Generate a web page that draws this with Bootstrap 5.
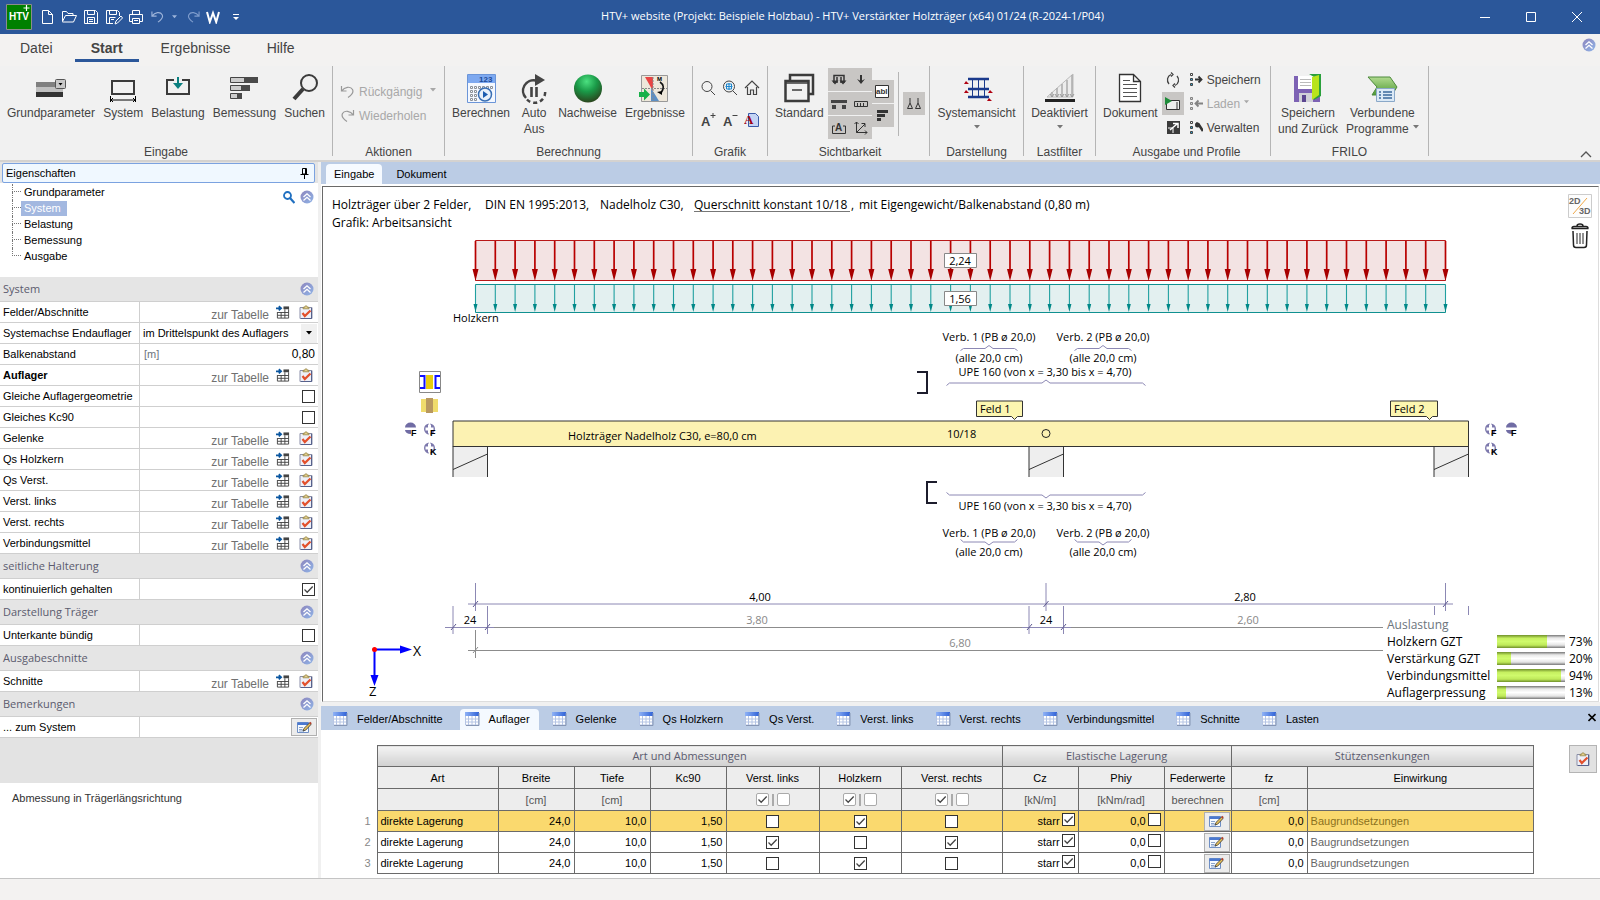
<!DOCTYPE html>
<html lang="de">
<head>
<meta charset="utf-8">
<meta name="viewport" content="width=device-width, initial-scale=1">
<title>HTV+ Verstärkter Holzträger</title>
<link href="https://cdn.jsdelivr.net/npm/bootstrap@5.3.0/dist/css/bootstrap.min.css" rel="stylesheet">
<style>
:root{--ui:"Liberation Sans",Arial,sans-serif;--hum:"Open Sans","Noto Sans",sans-serif;--blue:#2b579a;--strip:#bbcce5;--ink:#444}
body{font-family:var(--ui);font-size:11px;line-height:16px;color:#000;background:#f0f0f0;overflow:hidden}
button{border:0;background:none;padding:0;color:inherit;font:inherit}
svg{display:block;flex:none}
a{color:inherit;text-decoration:none}
/* title bar */
.titlebar{height:34px;background:var(--blue);color:#fff;font-family:var(--hum)}
.applogo{width:26px;height:26px;margin:0 8px 0 6px}
.quick{gap:6px}
.wincap{left:0;right:0;top:8px;text-align:center;font-size:11px;padding-left:105px;pointer-events:none}
.winbtns button{width:46px;height:34px;display:grid;place-items:center}
/* menu and ribbon */
.ribbon{height:128px;background:#f1f1f1;border-bottom:2px solid #d4d2d0;color:var(--ink);font-size:12px}
.menurow{height:32px;background:#f3f2f1;font-size:14px;gap:8px;padding-left:6px}
.menurow a{height:28px;line-height:29px;padding:0 14px;border-bottom:3px solid transparent}
.menurow a.active{font-weight:700;border-color:var(--blue);padding:0 16px}
.rgroups{height:94px}
.rgroup{border-right:1px solid #b5b5b5;height:90px;display:flex;flex-direction:column;padding:0 7px;flex:none}
.rgroup>.items{flex:1;display:flex;justify-content:space-between;align-items:flex-start;padding-top:6px}
.rgroup>.stackbtns{padding-top:14px}
.rgroup>.cap{text-align:center;line-height:16px;height:12px}
.bigbtn{display:flex;flex-direction:column;align-items:center;text-align:center;line-height:16px;white-space:nowrap}
.bigbtn svg{margin-bottom:1px}
.arrow{color:#777}
.rowbtn{display:flex;align-items:center;height:24px;gap:4px;white-space:nowrap}
.dim{color:#a8a8a8}
.w1{width:333px}.w2{width:112px}.w3{width:248px}.w4{width:75px}.w5{width:162px}.w6{width:94px}.w7{width:72px}.w8{width:175px}.w9{width:158px}
.graf{display:grid;grid-template-columns:repeat(3,22px);grid-auto-rows:32px;place-items:center}
.tg{background:#c8c6c4;width:22px;height:23px;display:grid;place-items:center}
.liftup{margin-top:-4px}
.vsep{width:1px;height:64px;background:#b5b5b5}
/* property panel */
.props{width:318px;background:#e3e3e3;flex:none}
.ptitle{height:20px;margin:1px 3px 0 2px;border:1px solid #7ba2e0;border-radius:2px;background:#f0f8ff;padding:0 5px 0 3px;line-height:18px}
.tree{background:#fff;height:94px;position:relative;padding:1px 0 0 12px}
.tree ul{list-style:none;margin:0;padding:0;width:52px}
.tree li{height:16px;line-height:15px;display:flex;align-items:center;position:relative}
.tree li::before{content:"";width:9px;height:8px;border-left:1px dotted #777;border-bottom:1px dotted #777;flex:none;align-self:flex-start}
.tree li:not(:last-child)::after{content:"";position:absolute;left:0;top:8px;height:8px;border-left:1px dotted #777}
.tree li a{padding:0 3px 0 3px;white-space:nowrap}
.tree li a.active{background:#a3b8e0;color:#fff;padding-right:6px}
.treetools{position:absolute;right:4px;top:7px;display:flex;gap:5px}
.phead{height:25px;background:#e5e5e5;border-bottom:1px solid #cfcfcf;font-family:var(--hum);color:#5b5b6e;font-weight:500;padding:0 4px 0 3px;display:flex;align-items:center;justify-content:space-between}
.prow{height:21px;background:#fff;border-bottom:1px solid #cfcfcf;display:flex}
.prow>.k{width:140px;flex:none;border-right:1px solid #cfcfcf;padding-left:3px;line-height:20px;white-space:nowrap}
.prow>.v{flex:1;display:flex;align-items:center;justify-content:flex-end;padding-right:3px;min-width:0}
.prow>.v[data-zt]{padding-right:5px}
.prow>.flush{padding-right:1px}
.prow .lnk{color:#707070;font-size:12px;margin:5px 7px 0 0}
.prow .v button+button{margin-left:9px}
.prow input.num{border:0;background:none;width:60px;text-align:right;padding:0;font-size:12px;outline:0}
.prow select{border:0;background:#fff;appearance:none;flex:1;min-width:0;height:19px;padding:0 0 0 3px;font-size:11px;color:#000}
.ddarrow{width:16px;height:19px;background:#f0f0f0;display:grid;place-items:center;pointer-events:none}
.notebtn{width:26px;height:18px;border:1px solid #b0b0b0;background:#ececec;display:grid;place-items:center}
.ck{appearance:none;width:13px;height:13px;border:1px solid #333;background:#fff;margin:0;display:block;flex:none}
.ck:checked{background:#fff url("data:image/svg+xml,%3Csvg xmlns='http://www.w3.org/2000/svg' viewBox='0 0 11 11'%3E%3Cpath d='M1.5 5.5l2.700 2.700L9.700 2.500' fill='none' stroke='%23444' stroke-width='1.300'/%3E%3C/svg%3E") center/11px}
.ck.soft{border-color:#aaa;border-radius:2px;opacity:1}
.help{height:95px;background:#fff;padding:7px 12px;color:#333}
/* work area */
.work{margin-left:3px;background:#fff;min-width:0}
.doctabs{height:22px;background:var(--strip);padding-left:5px}
.doctabs a{height:20px;line-height:21px;padding:0 8px;border-radius:4px 4px 0 0}
.doctabs a.active{background:#f6faff}
.doctabs a+a{margin-left:6px}
.stage{position:relative;margin:2px 1px 0 1px;border:1px solid #ddd;border-top-color:#696969;border-left-color:#696969;min-height:0;overflow:hidden;background:#fff}
.stage>svg.plan{width:100%;height:100%;font-family:var(--hum);font-size:11px}
.plan .hd{font-size:12px}
.plan .mid{text-anchor:middle}
.plan .soft{fill:#888}
.stagetools{position:absolute;right:6px;top:7px;display:flex;flex-direction:column;align-items:center;gap:5px}
.usage{position:absolute;right:0;bottom:0;width:213px;background:#fff;font:12px/17px var(--hum);padding-left:2px}
.usage .bar{width:68px;height:13px;background:linear-gradient(#777,#e8e8e8 22%,#fff 50%,#e4e4e4 78%,#777)}
.usage .bar>i{display:block;height:13px;background:linear-gradient(#6f8f2a,#c6f060 25%,#cffa6c 50%,#bfe95a 78%,#6f8f2a)}
.usage .pc{width:33px;padding-left:4px}
.gridtabs{height:24px;margin-top:4px;background:var(--strip);padding:3px 4px 0 7px;box-shadow:0 -4px #f0f0f0}
.gridtabs a{display:flex;align-items:center;gap:9px;height:21px;padding:0 9px 2px 5px;margin-right:8px;white-space:nowrap;border-radius:4px 4px 0 0}
.gridtabs a.active{background:#f4f9ff}
.gridzone{height:148px;padding:15px 3px 0 24px}
.sheet{border-collapse:collapse;table-layout:fixed;width:100%;margin-right:35px}
.sheet th,.sheet td{border:1px solid #6a6a6a;padding:0 3px;height:21px;line-height:18px;font-weight:400;white-space:nowrap;overflow:hidden}
.sheet thead th{background:#ededed;text-align:center;height:22px;padding:0}
.sheet thead tr:first-child th{height:21px;background:linear-gradient(#f4f4f4,#d0d0d0);font-family:var(--hum);color:#5b5b6e}
.sheet .un th{color:#555}
.sheet th.no,.sheet thead tr th.no{border:0;background:#fff;color:#888;text-align:right;padding-right:6px}
.sheet tr.sel td{background:#fad96e}
.sheet .r{text-align:right}
.sheet .ck{margin:auto}
.sheet .duo{display:flex;justify-content:center;align-items:center;gap:3px}
.sheet .duo .ck{margin:0}
.sheet .duo i{width:2px;height:12px;background:#aaa}
.sheet .vc{display:flex;justify-content:flex-end;gap:2px}
.sheet .vc .ck{margin:1px 0 0}
.sheet td.b{padding:0 1px}
.sheet .notebtn{height:19px;margin-left:auto}
.sheet .ew{color:#666}
.sheet tr.sel .ew{color:#8a7120}
.toolbtn{width:28px;height:28px;background:#e2e2e2;border:1px solid #b4b4b4;display:grid;place-items:center;flex:none}
.status{height:22px;background:#f3f2f1;border-top:1px solid #c4c4c4}
</style>
</head>
<body class="vh-100 d-flex flex-column">
<svg width="0" height="0" class="position-absolute" aria-hidden="true">
<defs>
<linearGradient id="gb" x1="0" y1="0" x2="1" y2="1"><stop offset="0" stop-color="#8e86bd"/><stop offset="1" stop-color="#8fb4e8"/></linearGradient>
<radialGradient id="gg" cx=".45" cy=".25" r=".8"><stop offset="0" stop-color="#4be080"/><stop offset=".45" stop-color="#1a9a48"/><stop offset="1" stop-color="#2c3a18"/></radialGradient>
<linearGradient id="gh" x1="0" y1="0" x2="1" y2="0"><stop offset="0" stop-color="#8fb2f5"/><stop offset="1" stop-color="#2f62d8"/></linearGradient>
<linearGradient id="gv" x1="0" y1="0" x2="0" y2="1"><stop offset="0" stop-color="#b2db90"/><stop offset="1" stop-color="#4e9a35"/></linearGradient>
<symbol id="chev" viewBox="0 0 14 14"><circle cx="7" cy="7" r="6.500" fill="url(#gb)"/><path d="M3.500 7L7 3.800 10.500 7M3.500 10.500L7 7.300l3.500 3.200" fill="none" stroke="#fff" stroke-width="1.300"/></symbol>
<symbol id="tbl" viewBox="0 0 15 15"><path d="M0 3h5M3 .8L5.500 3 3 5.200" stroke="#0a56a0" stroke-width="1.800" fill="none"/><path d="M8 1h6v3H8z" fill="#444"/><path d="M1.500 7v6.500h12V4M1.500 7.500h12M1.500 10.500h12M5.500 7v6.500M9.500 4v9.500" fill="none" stroke="#444"/></symbol>
<symbol id="clip" viewBox="0 0 14 15"><path d="M1 2.500h12v11H1z" fill="#eef0f8" stroke="#8a8fa8"/><path d="M12.500 3v10.500H2" fill="none" stroke="#56618c"/><path d="M4 3.800V2.300h1.500a1.500 1.500 0 013 0H10v1.500z" fill="#e3cf8a" stroke="#8d7b3c" stroke-width=".7"/><path d="M3.500 8l2.300 3L11.500 5.500" fill="none" stroke="#e2502c" stroke-width="2.200"/></symbol>
<symbol id="note" viewBox="0 0 15 13"><path d="M.5 1.500h11v10H.5z" fill="#f6faff" stroke="#6f8fc4"/><path d="M.5 1.500h11v2.500H.5z" fill="#4a78d0"/><path d="M2 6.500h4M2 8.500h3.500M2 10h5" stroke="#8aa4cc"/><path d="M6 10l1-2.600L12.500 2l1.600 1.400-5.500 5.800z" fill="#e8c25a" stroke="#333" stroke-width=".8"/><path d="M12 2.200L13.400.8l1.400 1.400-1.200 1.400z" fill="#b04030"/></symbol>
<symbol id="grid" viewBox="0 0 15 14"><path d="M.5.5h13v12.500H.5z" fill="#fff" stroke="#b6c5e4"/><path d="M0 0h14v4H0z" fill="url(#gh)"/><path d="M3.500 4v9M7 4v9M10.500 4v9M1 7h13M1 10h13" stroke="#b4c4e4"/><path d="M14 1v12.500H1" fill="none" stroke="#8696b4"/></symbol>
<symbol id="undo" viewBox="0 0 14 14"><path d="M1 1v5h5M1.300 5.800C4 2 10 .8 12 4.500c1.500 3-.8 5.500-4.500 8" fill="none" stroke="currentColor" stroke-width="1.200"/></symbol>
<symbol id="redo" viewBox="0 0 14 14"><path d="M13 1v5H8M12.700 5.800C10 2 4 .8 2 4.500.5 7.500 2.800 10 6.500 12.500" fill="none" stroke="currentColor" stroke-width="1.200"/></symbol>
<symbol id="dd" viewBox="0 0 6 4"><path d="M0 0h6L3 3.500z" fill="currentColor"/></symbol>
<symbol id="lst" viewBox="0 0 16 16"><path d="M1.500 1.500h2v2h-2z" fill="#fff" stroke="#444"/><path d="M1.500 6.500h2v2h-2zM1.500 11.500h2v2h-2z" fill="#2aa8e0" stroke="#444"/></symbol>
<symbol id="plusm" viewBox="0 0 14 14"><circle cx="5.500" cy="6" r="5.500" fill="#7c78ac"/><path d="M5.500 1.500v9M1.500 6h8" stroke="#fff" stroke-width="3"/><path d="M5.500 0v2.500M5.500 9.500V12" stroke="#fff"/></symbol>
</defs>
</svg>

<header class="titlebar d-flex align-items-center position-relative">
  <svg class="applogo" viewBox="0 0 26 26"><path d="M.5.5h25v25H.5z" fill="#008000" stroke="#8c8c8c"/><text x="3" y="16" font-family="Liberation Sans" font-size="10" font-weight="700" fill="#fff">HTV</text><path d="M20.500 1v6M17.500 4h6" stroke="#fff" stroke-width="1.200"/></svg>
  <div class="quick d-flex align-items-center">
    <button aria-label="Neu"><svg width="16" height="16" fill="none" stroke="#fff"><path d="M2.500 1.500h6l4 4v9h-10zM8.500 1.500v4h4"/></svg></button>
    <button aria-label="Öffnen"><svg width="16" height="16" fill="none" stroke="#fff"><path d="M.5 12.500v-10h4l1.500 2h5v2M.5 12.500l3-6h11l-3 6.500H.5"/></svg></button>
    <button aria-label="Speichern"><svg width="16" height="16" fill="none" stroke="#fff"><path d="M.5 1.500h11l2 2v11H.5zM3.500 1.500v4h7v-4M3.500 14.500v-6h7v6M5 10.500h4M5 12.500h4"/></svg></button>
    <button aria-label="Speichern unter"><svg width="17" height="16" fill="none" stroke="#fff"><path d="M7 14.500H.5v-13h11l2 2V7M3.500 1.500v4h7v-4M3.500 14.500v-6h6M5 10.500h3M9 15l1-3 5-5 1.500 2-5 5z"/></svg></button>
    <button aria-label="Drucken"><svg width="16" height="16" fill="none" stroke="#fff"><path d="M3.500 5V1.500h7V5M3.500 12.500h-3v-7h13v7h-3M3.500 9.500h7v5h-7zM5 11.500h4"/></svg></button>
    <button aria-label="Rückgängig" class="d-flex align-items-center gap-2 dim-undo" style="color:#9db4da"><svg width="13" height="14"><use href="#undo"/></svg><svg width="5" height="4"><use href="#dd"/></svg></button>
    <button aria-label="Wiederholen" class="ms-1" style="color:#7f9dcd"><svg width="13" height="14"><use href="#redo"/></svg></button>
    <button aria-label="Word"><svg width="14" height="14" fill="none" stroke="#fff" stroke-width="2"><path d="M1 2l2.800 10L7 3l3.200 9L13 2"/></svg></button>
    <button aria-label="Anpassen" class="ms-1"><svg width="12" height="12"><path d="M3 3.500h6" stroke="#fff"/><path d="M3 6h6L6 9z" fill="#fff"/></svg></button>
  </div>
  <div class="wincap position-absolute">HTV+ website (Projekt: Beispiele Holzbau) - HTV+ Verstärkter Holzträger (x64) 01/24 (R-2024-1/P04)</div>
  <div class="winbtns d-flex ms-auto position-relative">
    <button aria-label="Minimieren"><svg width="12" height="12"><path d="M1 6.500h10" stroke="#fff"/></svg></button>
    <button aria-label="Maximieren"><svg width="12" height="12"><path d="M1.500 1.500h9v9h-9z" fill="none" stroke="#fff"/></svg></button>
    <button aria-label="Schließen"><svg width="12" height="12"><path d="M1 1l10 10M11 1L1 11" stroke="#fff"/></svg></button>
  </div>
</header>

<section class="ribbon">
  <nav class="menurow d-flex align-items-start">
    <a href="#">Datei</a><a href="#" class="active">Start</a><a href="#">Ergebnisse</a><a href="#">Hilfe</a>
    <button class="ms-auto mt-1 me-1" aria-label="Menüband umschalten"><svg width="14" height="14"><use href="#chev"/></svg></button>
  </nav>
  <div class="rgroups d-flex">
    <div class="rgroup w1"><div class="items">
      <button class="bigbtn"><svg width="32" height="32"><path d="M1 10h20v5H1z" fill="#808080"/><path d="M1 15h27v5H1z" fill="#c0c0c0"/><path d="M1 20h27v5H1z" fill="#333"/><rect x="20.500" y="7.500" width="10" height="9" rx="1" fill="#c8c8c8" stroke="#555"/><path d="M23.500 11h4l-2 2.500z"/></svg>Grundparameter</button>
      <button class="bigbtn"><svg width="32" height="32"><path d="M5 9h22v13H5z" fill="none" stroke="#3b3b3b" stroke-width="2"/><path d="M3.500 24v6M28.500 24v6M4 28h24M6 26l-2 2 2 2M26 26l2 2-2 2" fill="none" stroke="#000"/></svg>System</button>
      <button class="bigbtn"><svg width="32" height="32"><path d="M12 8H5v14h22V8h-7" fill="none" stroke="#3b3b3b" stroke-width="2"/><path d="M16 5v8" stroke="#0b8080" stroke-width="2"/><path d="M11 11h10l-5 6z" fill="#0b8080"/></svg>Belastung</button>
      <button class="bigbtn"><svg width="32" height="32"><path d="M2.500 5.500h14v5h-14zM2.500 13.500h11v5h-11zM2.500 21.500h7v5h-7z" fill="#ccc" stroke="#444"/><path d="M16 5h14v6H16zM13 13h9v6h-9zM9 21h5v6H9z" fill="#4a4a4a"/></svg>Bemessung</button>
      <button class="bigbtn"><svg width="32" height="32" fill="none" stroke="#3b3b3b"><circle cx="20" cy="11" r="8" stroke-width="2"/><path d="M14 17L5 27" stroke-width="4"/></svg>Suchen</button>
    </div><div class="cap">Eingabe</div></div>
    <div class="rgroup w2"><div class="items stackbtns flex-column justify-content-start dim">
      <button class="rowbtn" disabled><svg width="15" height="14" color="#999"><use href="#undo"/></svg>Rückgängig <svg width="6" height="4" class="ms-1 mb-1"><use href="#dd"/></svg></button>
      <button class="rowbtn" disabled><svg width="15" height="14" color="#999"><use href="#redo"/></svg>Wiederholen</button>
    </div><div class="cap">Aktionen</div></div>
    <div class="rgroup w3"><div class="items">
      <button class="bigbtn"><svg width="32" height="32"><path d="M2.500 2.500h28v28h-28z" fill="#f4f8ff" stroke="#6b95d8"/><path d="M3 3h27v8H3z" fill="#7ea9f0"/><text x="14" y="10" font-size="8" font-weight="700" fill="#204a98" font-family="Liberation Sans">123</text><g fill="#fff" stroke="#8a9098"><path d="M5.500 14.500h2v2h-2zM9.500 14.500h2v2h-2zM13.500 14.500h2v2h-2zM17.500 14.500h2v2h-2zM21.500 14.500h2v2h-2zM25.500 14.500h2v2h-2zM5.500 18.500h2v2h-2zM9.500 18.500h2v2h-2zM5.500 22.500h2v2h-2zM9.500 22.500h2v2h-2zM5.500 26.500h2v2h-2zM9.500 26.500h2v2h-2z"/></g><circle cx="20" cy="22.500" r="6.500" fill="#e8f0fa" stroke="#3a6fb4" stroke-width="1.500"/><path d="M18 19v7l5-3.500z" fill="#1c5cb0"/></svg>Berechnen</button>
      <button class="bigbtn"><svg width="32" height="32" fill="none" stroke="#444"><path d="M8 26A10.500 10.500 0 0118 8.500" stroke-width="2.500"/><path d="M17 2l10 6-10 6z" fill="#444" stroke="none"/><path d="M13.500 15v10M18.500 15v10" stroke-width="2.600"/><path d="M9 27.500a10.500 10.500 0 0018-9" stroke-width="2.500" stroke-dasharray="4 3"/></svg>Auto<br>Aus</button>
      <button class="bigbtn"><svg width="32" height="32"><circle cx="16" cy="16.500" r="14" fill="url(#gg)"/></svg>Nachweise</button>
      <button class="bigbtn"><svg width="32" height="32"><path d="M2.500 3.500h26v26h-26z" fill="#eee7da" stroke="#999"/><path d="M6 5h8v14z" fill="#e84444"/><path d="M12 16v13h8z" fill="#5d8fc4"/><path d="M14 5v23M3 16.500h25" stroke="#888" stroke-dasharray="2 1"/><path d="M21 10q6 4 1 11" fill="none" stroke="#111" stroke-width="1.600"/><path d="M18 20l5-1v4z"/><text x="18" y="9" font-size="6" font-weight="700" font-family="Liberation Sans">M</text><path d="M0 20h5v-3.500l6 6-6 6V25H0z" fill="#18b048"/></svg>Ergebnisse</button>
    </div><div class="cap">Berechnung</div></div>
    <div class="rgroup w4 px-1"><div class="items justify-content-center"><div class="graf">
      <button aria-label="Zoom"><svg width="16" height="16" fill="none" stroke="#444"><circle cx="7" cy="6.500" r="5"/><path d="M10.500 10.500L15 15"/></svg></button>
      <button aria-label="Zoom alles"><svg width="16" height="16" fill="none" stroke="#444"><circle cx="7" cy="6.500" r="5.500"/><path d="M11 11l4 4"/><path d="M4.500 4h5v5h-5zM7 3v7M3.500 6.500h7" stroke="#1b87d0"/></svg></button>
      <button aria-label="Startansicht"><svg width="16" height="16" fill="none" stroke="#444" stroke-width="1.200"><path d="M1 8l7-7 7 7M3.500 7v7.500h3V10h3v4.500h3V7"/></svg></button>
      <button aria-label="Schrift größer"><svg width="16" height="16"><text x="1" y="14" font-size="13" font-weight="700" fill="#444" font-family="Liberation Sans">A</text><path d="M10.500 3.500h5M13 1v5" stroke="#444"/></svg></button>
      <button aria-label="Schrift kleiner"><svg width="16" height="16"><text x="1" y="14" font-size="13" font-weight="700" fill="#444" font-family="Liberation Sans">A</text><path d="M10.500 3.500h5" stroke="#444"/></svg></button>
      <button aria-label="Schriftart"><svg width="16" height="16"><path d="M4.500 1.500h7l3 3v10h-10z" fill="#c4d4f4" stroke="#3a5aa8"/><text x="0" y="12" font-size="13" font-weight="700" fill="#a00010" font-family="Liberation Serif">A</text></svg></button>
    </div></div><div class="cap">Grafik</div></div>
    <div class="rgroup w5 pe-1"><div class="items justify-content-start">
      <button class="bigbtn"><svg width="32" height="32" fill="none" stroke="#3b3b3b" stroke-width="2.500"><path d="M7 8V3h23v19h-4"/><path d="M2.500 9h23v20h-23z"/><path d="M3 11h22" stroke-width="1.500"/><path d="M9 18h10" stroke-width="1.500"/></svg>Standard</button>
      <div class="d-flex ms-1 align-items-center liftup">
        <div class="d-grid" style="grid-template-columns:22px 22px;row-gap:1px">
          <button class="tg" aria-label="Lasten"><svg width="16" height="12" stroke="#333" fill="none" stroke-width="1.500"><path d="M3 9V1.500h10V9M6 3v6M10 3v6"/><path d="M.5 6.500h7l-3.500 4zM8.500 6.500h7l-3.500 4z" fill="#333" stroke="none"/></svg></button>
          <button class="tg" aria-label="Einzellast"><svg width="16" height="12"><path d="M8 1v6" stroke="#333" stroke-width="2"/><path d="M4 5l4 5 4-5-4 2z" fill="#333"/></svg></button>
          <button class="tg" aria-label="Träger"><svg width="16" height="12" fill="#444"><path d="M0 2h16v3H0zM1 7h4v4H1zM11 7h4v4h-4z"/></svg></button>
          <button class="tg" aria-label="Maße"><svg width="16" height="12" fill="none" stroke="#333"><path d="M1.500 3.500h13v5h-13zM4.500 5v3.500M7.500 5v3.500M10.500 5v3.500"/></svg></button>
          <button class="tg" aria-label="Beschriftung"><svg width="16" height="14"><path d="M4 5H1.500v7.500h13V5H12" fill="none" stroke="#333"/><text x="4" y="10" font-size="10" font-weight="700" fill="#333" font-family="Liberation Sans">A</text></svg></button>
          <button class="tg" aria-label="Achsen"><svg width="16" height="14" fill="none" stroke="#333"><path d="M3.500 1v10.500H14M1.500 3l2-2 2 2M12 9.500l2 2-2 2M3.500 11.500L12 3M8.500 2.500H12V6"/></svg></button>
        </div>
        <div class="d-grid" style="row-gap:1px">
          <button class="tg" aria-label="Text"><svg width="15" height="14"><path d="M.5.500h13v12H.5z" fill="#fff" stroke="#333"/><text x="1" y="9" font-size="8" font-weight="700" fill="#333" font-family="Liberation Sans">abl</text></svg></button>
          <button class="tg" aria-label="Balken"><svg width="14" height="14" fill="#333"><path d="M1 1h11v3H1zM1 5h8v3H1zM1 9h4v3H1z"/></svg></button>
        </div>
        <div class="vsep mx-1"></div>
        <button class="tg" aria-label="Lager"><svg width="16" height="14" fill="none" stroke="#333"><path d="M4 1v5M1.500 11.500L4 6l2.500 5.500zM12 1v5M9.500 11.500L12 6l2.500 5.500z"/></svg></button>
      </div>
    </div><div class="cap">Sichtbarkeit</div></div>
    <div class="rgroup w6"><div class="items justify-content-center">
      <button class="bigbtn"><svg width="32" height="32"><path d="M7 7h21M7 17h21M7 25h21" stroke="#1b3a8c" stroke-width="2.500"/><path d="M11.500 7v18M17.500 7v18M23.500 7v18" stroke="#1b3a8c"/><path d="M5 9l-2 3h5zM5 18l-2 3h5zM29 18l-2 3h5zM28 26l-2 3h5z" fill="#b00010"/></svg>Systemansicht<svg width="6" height="4" class="mt-1 arrow"><use href="#dd"/></svg></button>
    </div><div class="cap">Darstellung</div></div>
    <div class="rgroup w7 px-1"><div class="items justify-content-center">
      <button class="bigbtn"><svg width="32" height="32"><path d="M3 25L29 2v23z" fill="#ececec" stroke="#bbb"/><path d="M8 20v5M13 16v9M18 12v13M23 8v17M28 3v22" stroke="#aaa" stroke-width="1.500"/><path d="M6 22l2 3 2-3M11 22l2 3 2-3M16 22l2 3 2-3M21 22l2 3 2-3M26 22l2 3 2-3" fill="none" stroke="#999"/><path d="M1 28.500h30" stroke="#222" stroke-width="3"/></svg>Deaktiviert<svg width="6" height="4" class="mt-1 arrow"><use href="#dd"/></svg></button>
    </div><div class="cap">Lastfilter</div></div>
    <div class="rgroup w8 pe-0"><div class="items justify-content-start">
      <button class="bigbtn"><svg width="32" height="32"><path d="M5.500 2.500h14l7 7v20h-21zM19.500 2.500v7h7" fill="#fff" stroke="#333" stroke-width="1.300"/><path d="M9 8.500h7M9 12.500h14M9 16.500h14M9 20.500h14M9 24.500h14" stroke="#555"/></svg>Dokument</button>
      <div class="d-flex flex-column ms-1 liftup">
        <button class="rowbtn px-1" aria-label="Aktualisieren"><svg width="14" height="16" fill="none" stroke="#444" stroke-width="1.300"><path d="M5 2.500A6 6 0 003 12M9 13.500A6 6 0 0011 4M5 .5l2 2-2 2M9 11.500l-2 2 2 2"/></svg></button>
        <button class="tg" aria-label="Vorschau"><svg width="16" height="14"><path d="M4 3.500h10.500v9H1.500V7" fill="#eee" stroke="#333"/><path d="M0 0l7 4-7 4z" fill="#1e8c3a"/><path d="M12 5v7" stroke="#333"/></svg></button>
        <button class="rowbtn px-1" aria-label="Vollbild"><svg width="15" height="15"><path d="M1 1h13v13H1z" fill="#3b3b3b"/><path d="M2 8h5v5" stroke="#fff" fill="none"/><path d="M4 10l7-6M7 3.500h5V8" stroke="#fff" stroke-width="1.500" fill="none"/></svg></button>
      </div>
      <div class="d-flex flex-column ms-1 liftup">
        <button class="rowbtn"><svg width="14" height="16"><use href="#lst" width="16"/><path d="M6 7.500h6M9.500 4.500l3 3-3 3" fill="none" stroke="#333" stroke-width="1.800"/></svg>Speichern</button>
        <button class="rowbtn dim" disabled><svg width="14" height="16" opacity=".7"><path d="M1.500 1.500h2v2h-2zM1.500 6.500h2v2h-2zM1.500 11.500h2v2h-2z" fill="#ccc" stroke="#555"/><path d="M7 7.500h7M9.500 4.500l-3 3 3 3" fill="none" stroke="#555" stroke-width="1.800"/></svg>Laden<svg width="5" height="4" class="mb-1"><use href="#dd"/></svg></button>
        <button class="rowbtn"><svg width="14" height="16"><use href="#lst" width="16"/><path d="M7 3l3 2 4 6" fill="none" stroke="#333" stroke-width="2.600"/><circle cx="8.500" cy="5" r="2.500" fill="#333"/></svg>Verwalten</button>
      </div>
    </div><div class="cap">Ausgabe und Profile</div></div>
    <div class="rgroup w9"><div class="items justify-content-start gap-2">
      <button class="bigbtn"><svg width="32" height="32"><path d="M2 4h26v26H2z" fill="#7d62b4"/><path d="M6 4h16v13H6z" fill="#fff"/><path d="M8 7.500h11M8 10.500h11M8 13.500h11" stroke="#bbb"/><path d="M7 21h14v9H7z" fill="#d0d0d8"/><path d="M10 23h4v7h-4z" fill="#5b4590"/><path d="M17 2h12v22l-7 4V5z" fill="#2aa03c"/><path d="M20 5l7-2v20l-7 5z" fill="#b8e41c"/></svg>Speichern<br>und Zurück</button>
      <button class="bigbtn"><svg width="32" height="32"><path d="M2 5h22l7 10-5 8H6l5-8z" fill="url(#gv)" stroke="#4d8a3c"/><path d="M10.500 16.500h18v13h-18z" fill="#dbe9f6" stroke="#8aa8c8"/><path d="M13 20h2M17 20h9M13 23h2M17 23h9M13 26h2M17 26h9" stroke="#3d6a9c" stroke-width="1.300"/></svg>Verbundene<span class="d-flex align-items-center gap-1">Programme<svg width="6" height="4" class="mb-1 arrow"><use href="#dd"/></svg></span></button>
    </div><div class="cap">FRILO</div></div>
    <button class="ms-auto align-self-end me-2" aria-label="Menüband einklappen"><svg width="12" height="10"><path d="M1 7l5-5 5 5" fill="none" stroke="#555" stroke-width="1.300"/></svg></button>
  </div>
</section>

<main class="d-flex flex-fill" style="min-height:0">
  <aside class="props d-flex flex-column">
    <div class="ptitle d-flex justify-content-between align-items-center">Eigenschaften<button aria-label="Anheften"><svg width="9" height="11"><path d="M2.500.5h4V6h-4zM.5 6.500h8M4.500 6.500V11" fill="none" stroke="#000"/><path d="M5.500 1v5" stroke="#000"/></svg></button></div>
    <nav class="tree">
      <ul><li><a href="#">Grundparameter</a></li><li><a href="#" class="active">System</a></li><li><a href="#">Belastung</a></li><li><a href="#">Bemessung</a></li><li><a href="#">Ausgabe</a></li></ul>
      <div class="treetools"><button aria-label="Suchen"><svg width="12" height="13" fill="none" stroke="#1f6fc0"><circle cx="4.500" cy="4.500" r="3.500" stroke-width="1.800"/><path d="M7 7l4.500 5" stroke-width="2.200"/></svg></button><button aria-label="Einklappen"><svg width="14" height="14"><use href="#chev"/></svg></button></div>
    </nav>
    <div class="phead">System<button aria-label="Einklappen"><svg width="14" height="14"><use href="#chev"/></svg></button></div>
    <div class="prow"><div class="k">Felder/Abschnitte</div><div class="v" data-zt></div></div>
    <div class="prow"><label class="k" for="ax">Systemachse Endauflager</label><div class="v flush"><select id="ax"><option>im Drittelspunkt des Auflagers</option></select><span class="ddarrow"><svg width="6" height="4"><use href="#dd"/></svg></span></div></div>
    <div class="prow"><label class="k" for="ba">Balkenabstand</label><div class="v"><span class="me-auto ps-1 text-secondary">[m]</span><input class="num" id="ba" value="0,80"></div></div>
    <div class="prow"><div class="k fw-bold">Auflager</div><div class="v" data-zt></div></div>
    <div class="prow"><label class="k" for="c1">Gleiche Auflagergeometrie</label><div class="v"><input type="checkbox" class="ck" id="c1"></div></div>
    <div class="prow"><label class="k" for="c2">Gleiches Kc90</label><div class="v"><input type="checkbox" class="ck" id="c2"></div></div>
    <div class="prow"><div class="k">Gelenke</div><div class="v" data-zt></div></div>
    <div class="prow"><div class="k">Qs Holzkern</div><div class="v" data-zt></div></div>
    <div class="prow"><div class="k">Qs Verst.</div><div class="v" data-zt></div></div>
    <div class="prow"><div class="k">Verst. links</div><div class="v" data-zt></div></div>
    <div class="prow"><div class="k">Verst. rechts</div><div class="v" data-zt></div></div>
    <div class="prow"><div class="k">Verbindungsmittel</div><div class="v" data-zt></div></div>
    <div class="phead">seitliche Halterung<button aria-label="Einklappen"><svg width="14" height="14"><use href="#chev"/></svg></button></div>
    <div class="prow"><label class="k" for="c3">kontinuierlich gehalten</label><div class="v"><input type="checkbox" class="ck" id="c3" checked></div></div>
    <div class="phead">Darstellung Träger<button aria-label="Einklappen"><svg width="14" height="14"><use href="#chev"/></svg></button></div>
    <div class="prow"><label class="k" for="c4">Unterkante bündig</label><div class="v"><input type="checkbox" class="ck" id="c4"></div></div>
    <div class="phead">Ausgabeschnitte<button aria-label="Einklappen"><svg width="14" height="14"><use href="#chev"/></svg></button></div>
    <div class="prow"><div class="k">Schnitte</div><div class="v" data-zt></div></div>
    <div class="phead">Bemerkungen<button aria-label="Einklappen"><svg width="14" height="14"><use href="#chev"/></svg></button></div>
    <div class="prow"><div class="k">... zum System</div><div class="v flush"><button class="notebtn" aria-label="Bemerkung bearbeiten"><svg width="15" height="13"><use href="#note"/></svg></button></div></div>
    <div class="help mt-auto">Abmessung in Trägerlängsrichtung</div>
  </aside>

  <section class="work flex-fill d-flex flex-column">
    <nav class="doctabs d-flex align-items-end"><a href="#" class="active">Eingabe</a><a href="#">Dokument</a></nav>
    <div class="stage flex-fill">
      <svg class="plan" viewBox="323 187 1275 514" preserveAspectRatio="xMinYMin meet">
        <g class="hd">
          <text x="332" y="209">Holzträger über 2 Felder,</text><text x="485" y="209">DIN EN 1995:2013,</text><text x="600" y="209">Nadelholz C30,</text><text x="694" y="209">Querschnitt konstant 10/18</text><text x="851" y="209">,</text><text x="859" y="209">mit Eigengewicht/Balkenabstand (0,80 m)</text>
          <path d="M694 211.500h156" stroke="#777"/>
          <text x="332" y="227">Grafik: Arbeitsansicht</text>
        </g>
        <path d="M475.500 240.500h970v40h-970z" fill="#f3e3e3" stroke="#b81818"/>
        <path d="M475.500 284.500h970v28h-970z" fill="#e3f0f0" stroke="#109090"/>
        <path id="redS" stroke="#b80000" stroke-width="1.700"/><path id="redH" fill="#a80000"/>
        <path id="tealS" stroke="#20a0a0" stroke-width="1.100"/><path id="tealH" fill="#008888"/>
        <path d="M944.500 253.500h32v14h-32zM944.500 291.500h32v14h-32z" fill="#fff" stroke="#888"/>
        <g class="mid"><text x="960" y="265">2,24</text><text x="960" y="303">1,56</text></g>
        <text x="453" y="322">Holzkern</text>
        <g class="mid">
          <text x="989" y="341">Verb. 1 (PB ø 20,0)</text><text x="1103" y="341">Verb. 2 (PB ø 20,0)</text>
          <text x="989" y="362">(alle 20,0 cm)</text><text x="1103" y="362">(alle 20,0 cm)</text>
          <text x="1045" y="376">UPE 160 (von x = 3,30 bis x = 4,70)</text>
          <text x="1045" y="510">UPE 160 (von x = 3,30 bis x = 4,70)</text>
          <text x="989" y="537">Verb. 1 (PB ø 20,0)</text><text x="1103" y="537">Verb. 2 (PB ø 20,0)</text>
          <text x="989" y="556">(alle 20,0 cm)</text><text x="1103" y="556">(alle 20,0 cm)</text>
        </g>
        <path d="M960.500 350.500l3-2h21.500l4-3 4 3h21.500l3 2M1074.500 350.500l3-2h21.500l4-3 4 3h21.500l3 2M946.500 385.500l3-2.500h92.500l4-3 4 3h92.500l3 2.500M946.500 492.500l3 2.500h92.500l4 3 4-3h92.500l3-2.500M960.500 539.500l3 2.500h21.500l4 3 4-3h21.500l3-2.500M1074.500 539.500l3 2.500h21.500l4 3 4-3h21.500l3-2.500" fill="none" stroke="#8c88b4"/>
        <path d="M917 372h10v21h-10M937 482h-10v21h10" fill="none" stroke="#1c1c2c" stroke-width="2"/>
        <path d="M453 421h1015.500v25.500H453z" fill="#fcf2b2" stroke="#333"/>
        <g id="sup"><path d="M453 447h34.500v30H453z" fill="#eee"/><path d="M453 446v31M487.500 446v31M453 469.500l34.500-15.500" stroke="#333"/></g>
        <use href="#sup" x="576"/><use href="#sup" x="981"/>
        <text x="568" y="440">Holzträger Nadelholz C30, e=80,0 cm</text><text x="947" y="438">10/18</text>
        <circle cx="1046" cy="433.500" r="4" fill="none" stroke="#222"/>
        <path d="M976.500 401h46v15.500h-5l-3 3-3-3h-35zM1390.500 401h47v15.500h-5l-3 3-3-3h-36z" fill="#fcf6b0" stroke="#333"/>
        <text x="980" y="413">Feld 1</text><text x="1394" y="413">Feld 2</text>
        <path d="M419.500 371.500h21v21h-21z" fill="#fff" stroke="#888"/><path d="M426 375h7v14h-7z" fill="#e8cc10"/><path d="M420 376h4.500v12H420M440 376h-4.500v12h4.500" fill="none" stroke="#1010ff" stroke-width="2"/>
        <path d="M421 399h17v13h-17z" fill="#f0dc6c"/><path d="M426 398h7v15h-7z" fill="#b89860"/>
        <use href="#plusm" x="424" y="423" width="14" height="14"/><use href="#plusm" x="424" y="442" width="14" height="14"/><use href="#plusm" x="1485" y="423" width="14" height="14"/><use href="#plusm" x="1485" y="442" width="14" height="14"/>
        <path d="M405 427.500a5.500 5 0 0111 0zM405 430a5.500 4 0 006 4v-4zM1506 427.500a5.500 5 0 0111 0zM1506 430a5.500 4 0 006 4v-4z" fill="#706ca4"/>
        <g font-size="9" font-weight="700" font-family="Liberation Sans"><text x="411" y="436">F</text><text x="430" y="436">F</text><text x="430" y="455">K</text><text x="1491" y="436">F</text><text x="1491" y="455">K</text><text x="1511" y="436">F</text></g>
        <g fill="none" stroke="#8c88b4"><path d="M468 604h985M475.500 583v28M1046 583v28M1445.500 583v28M445 627.500h49M1022 627.500h49M453 606v28M487.500 606v28M1029 606v28M1063.500 606v28M1434.500 606v9M1468.500 606v9"/><path d="M473 607l5-6M1043.500 607l5-6M1443 607l5-6M451 630l5-6M485 630l5-6M1027 630l5-6M1061 630l5-6" stroke="#5c5890"/></g>
        <path d="M494 627.500h528M1071 627.500h312M468 650.500h915M475.500 630v28M473 653l5-6" stroke="#8c8c8c" fill="none"/>
        <g class="mid"><text x="760" y="601">4,00</text><text x="1245" y="601">2,80</text><text x="470" y="624">24</text><text x="1046" y="624">24</text><g class="soft"><text x="757" y="624">3,80</text><text x="1248" y="624">2,60</text><text x="960" y="647">6,80</text></g></g>
        <path d="M374.500 649.500H402M374.500 649.500V677" stroke="#00f" stroke-width="2"/><path d="M400 645.500l12 4-12 4zM370.500 675l4 11 4-11z" fill="#00f"/><circle cx="374.500" cy="649.500" r="2.500" fill="#f00"/>
        <text x="413" y="656" font-size="14">X</text><text x="369" y="696" font-size="13">Z</text>
      </svg>
      <div class="stagetools">
        <button aria-label="2D/3D umschalten"><svg width="24" height="24"><path d="M.5.5h23v23H.5z" fill="#fdfdfd" stroke="#ccc"/><path d="M5 20L19 4" stroke="#f0a848"/><g font-family="Liberation Sans" font-size="9" font-weight="700" fill="#666"><text x="1" y="10">2D</text><text x="11" y="20">3D</text></g></svg></button>
        <button aria-label="Löschen"><svg width="20" height="26" fill="none" stroke="#222" stroke-width="1.500"><path d="M1.500 5.500h17M2 5.500q0-2 2-2h12q2 0 2 2M7 3q0-2 3-2t3 2M3 8l.5 14q0 2.500 2.500 2.500h8q2.500 0 2.500-2.500L17 8"/><path d="M7 10v11M10 10v11M13 10v11" stroke-width="1"/></svg></button>
      </div>
      <div class="usage">
        <div class="text-secondary">Auslastung</div>
        <div class="d-flex align-items-center"><span class="me-auto">Holzkern GZT</span><div class="bar"><i style="width:73%"></i></div><span class="pc">73%</span></div>
        <div class="d-flex align-items-center"><span class="me-auto">Verstärkung GZT</span><div class="bar"><i style="width:20%"></i></div><span class="pc">20%</span></div>
        <div class="d-flex align-items-center"><span class="me-auto">Verbindungsmittel</span><div class="bar"><i style="width:94%"></i></div><span class="pc">94%</span></div>
        <div class="d-flex align-items-center"><span class="me-auto">Auflagerpressung</span><div class="bar"><i style="width:13%"></i></div><span class="pc">13%</span></div>
      </div>
    </div>
    <nav class="gridtabs d-flex">
      <a href="#"><svg width="15" height="14"><use href="#grid"/></svg>Felder/Abschnitte</a><a href="#" class="active"><svg width="15" height="14"><use href="#grid"/></svg>Auflager</a><a href="#"><svg width="15" height="14"><use href="#grid"/></svg>Gelenke</a><a href="#"><svg width="15" height="14"><use href="#grid"/></svg>Qs Holzkern</a><a href="#"><svg width="15" height="14"><use href="#grid"/></svg>Qs Verst.</a><a href="#"><svg width="15" height="14"><use href="#grid"/></svg>Verst. links</a><a href="#"><svg width="15" height="14"><use href="#grid"/></svg>Verst. rechts</a><a href="#"><svg width="15" height="14"><use href="#grid"/></svg>Verbindungsmittel</a><a href="#"><svg width="15" height="14"><use href="#grid"/></svg>Schnitte</a><a href="#"><svg width="15" height="14"><use href="#grid"/></svg>Lasten</a>
      <button class="ms-auto align-self-start" aria-label="Tabelle schließen"><svg width="8" height="16"><path d="M.5 5l7 7M7.500 5l-7 7" stroke="#000" stroke-width="1.600"/></svg></button>
    </nav>
    <div class="gridzone d-flex align-items-start">
      <table class="sheet">
        <colgroup><col style="width:32px"><col style="width:121px"><col style="width:76px"><col style="width:76px"><col style="width:76px"><col style="width:93px"><col style="width:82px"><col style="width:101px"><col style="width:76px"><col style="width:86px"><col style="width:67px"><col style="width:76px"><col></colgroup>
        <thead>
          <tr><th class="no"></th><th colspan="7">Art und Abmessungen</th><th colspan="3">Elastische Lagerung</th><th colspan="2">Stützensenkungen</th></tr>
          <tr><th class="no"></th><th>Art</th><th>Breite</th><th>Tiefe</th><th>Kc90</th><th>Verst. links</th><th>Holzkern</th><th>Verst. rechts</th><th>Cz</th><th>Phiy</th><th>Federwerte</th><th>fz</th><th>Einwirkung</th></tr>
          <tr class="un"><th class="no"></th><th></th><th>[cm]</th><th>[cm]</th><th></th><th data-duo></th><th data-duo></th><th data-duo></th><th>[kN/m]</th><th>[kNm/rad]</th><th>berechnen</th><th>[cm]</th><th></th></tr>
        </thead>
        <tbody id="rows"></tbody>
      </table>
      <button class="toolbtn" aria-label="Prüfen"><svg width="14" height="15"><use href="#clip"/></svg></button>
    </div>
  </section>
</main>
<footer class="status"></footer>

<script src="https://cdn.jsdelivr.net/npm/bootstrap@5.3.0/dist/js/bootstrap.bundle.min.js"></script>
<script>
// links to the detail tables
document.querySelectorAll('[data-zt]').forEach(v => v.innerHTML =
  '<a href="#" class="lnk">zur Tabelle</a><button aria-label="Tabelle öffnen"><svg width="14" height="15"><use href="#tbl"/></svg></button>' +
  '<button aria-label="Eingabe prüfen"><svg width="14" height="15"><use href="#clip"/></svg></button>');
document.querySelectorAll('[data-duo]').forEach(v => v.innerHTML =
  '<span class="duo"><input type="checkbox" class="ck soft" checked disabled aria-label="alle"><i></i><input type="checkbox" class="ck soft" disabled aria-label="keine"></span>');
// support rows: reinforcement left, timber core, reinforcement right
const cb = (on, l) => `<input type="checkbox" class="ck" aria-label="${l}"${on ? ' checked' : ''}>`;
document.getElementById('rows').innerHTML = [[0,1,0],[1,0,1],[0,1,0]].map((c, i) =>
  `<tr class="${i ? '' : 'sel'}"><th class="no">${i + 1}</th><td>direkte Lagerung</td><td class="r">24,0</td><td class="r">10,0</td><td class="r">1,50</td>` +
  `<td>${cb(c[0],'Verst. links')}</td><td>${cb(c[1],'Holzkern')}</td><td>${cb(c[2],'Verst. rechts')}</td>` +
  `<td><div class="vc">starr${cb(1,'Cz starr')}</div></td><td><div class="vc">0,0${cb(0,'Phiy starr')}</div></td>` +
  `<td class="b"><button class="notebtn" aria-label="Federwerte berechnen"><svg width="15" height="13"><use href="#note"/></svg></button></td>` +
  `<td class="r">0,0</td><td class="ew">Baugrundsetzungen</td></tr>`).join('');
// line load arrows, evenly spaced over both spans
let rs = '', rh = '', ts = '', th = '';
for (let i = 0; i < 50; i++) {
  const x = (475.5 + i * 970 / 49).toFixed(1);
  rs += `M${x} 241v30`; rh += `M${x} 281l-3-12h6z`;
  ts += `M${x} 285v22`; th += `M${x} 312l-2-8h4z`;
}
redS.setAttribute('d', rs); redH.setAttribute('d', rh); tealS.setAttribute('d', ts); tealH.setAttribute('d', th);
</script>
</body>
</html>
